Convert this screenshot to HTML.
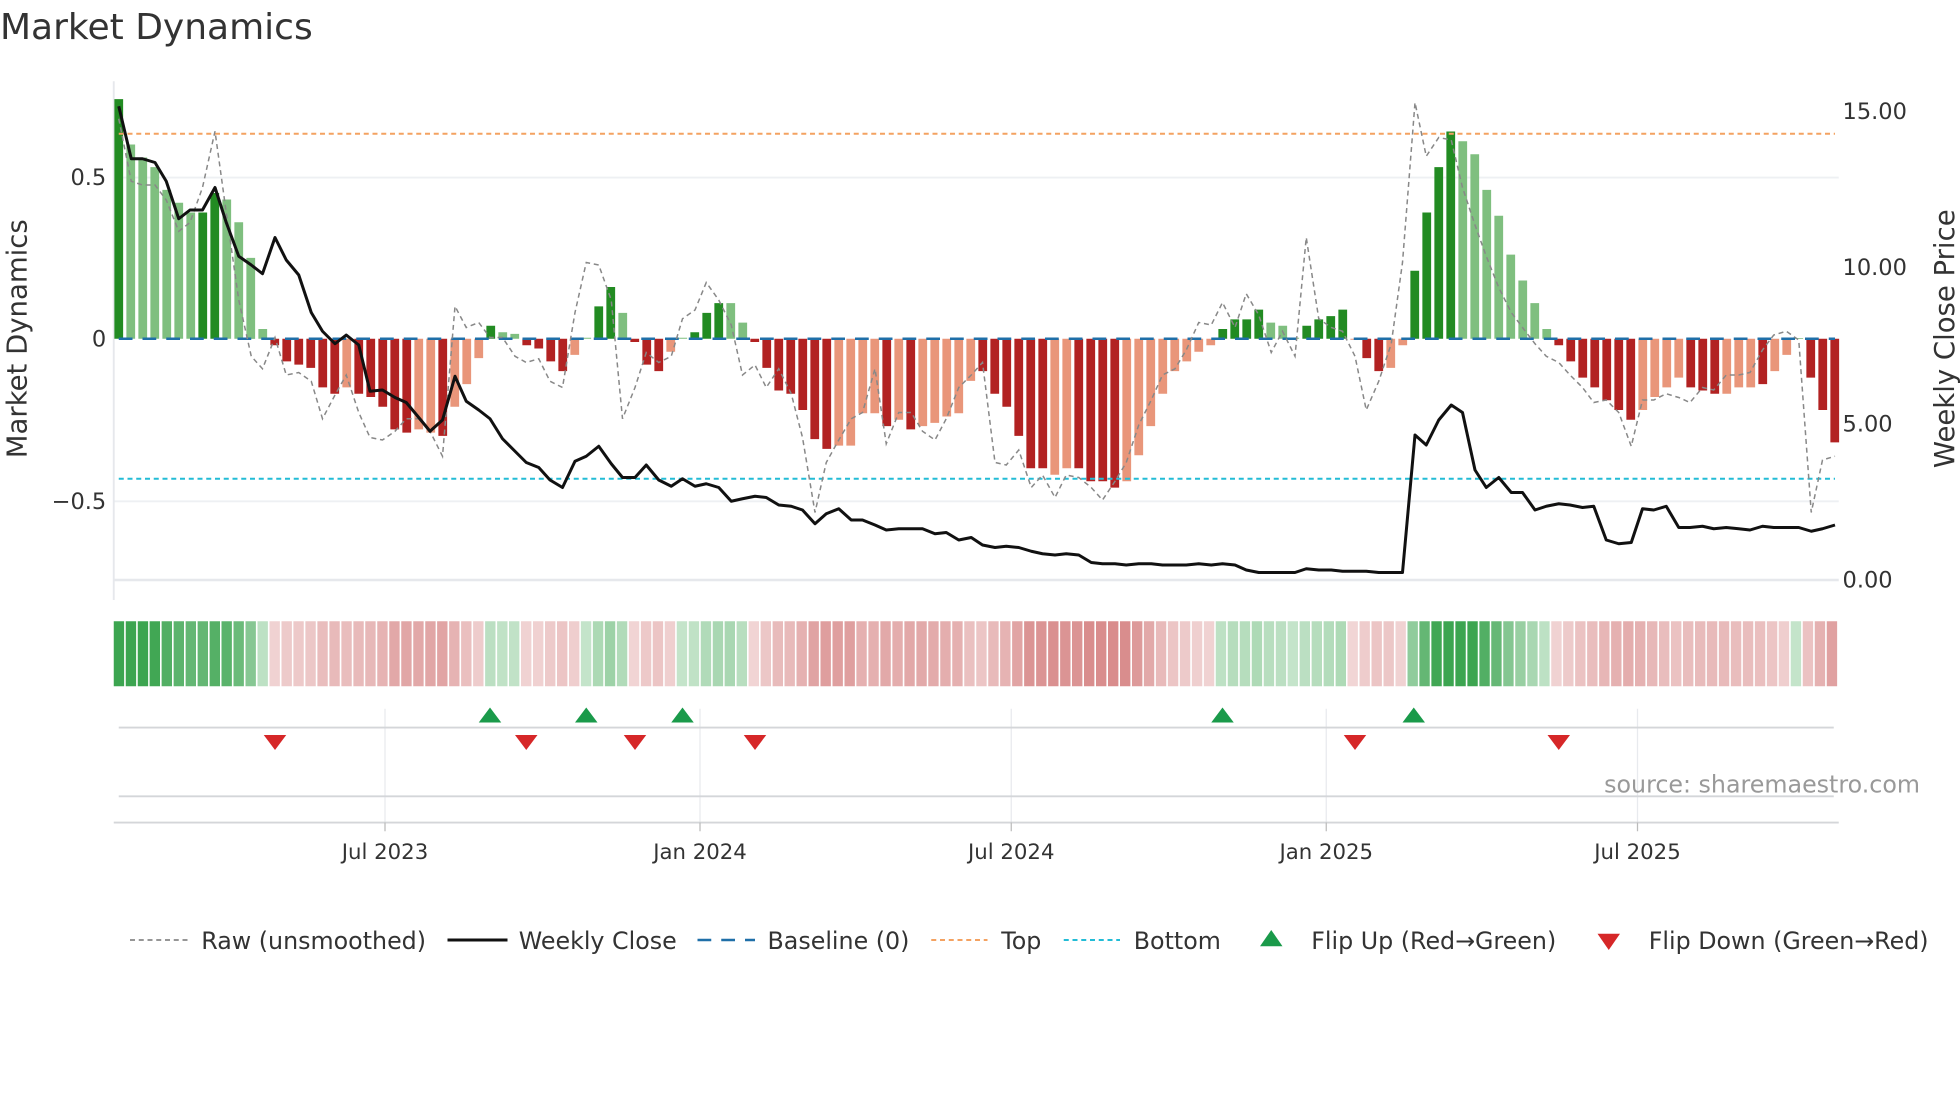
<!DOCTYPE html>
<html><head><meta charset="utf-8"><style>
html,body{margin:0;padding:0;background:#fff;}
svg{display:block;font-family:"DejaVu Sans","Liberation Sans",sans-serif;}
</style></head><body>
<svg id="s" width="1960" height="1102" viewBox="0 0 1568 881.6" xmlns="http://www.w3.org/2000/svg">
<rect width="1568" height="882" fill="#fff"/>
<text x="0" y="31" font-size="28.8" fill="#333">Market Dynamics</text>
<g stroke="#eef0f3" stroke-width="1.5">
<line x1="91" y1="142" x2="1471" y2="142"/>
<line x1="91" y1="401" x2="1471" y2="401"/>
<line x1="91" y1="464" x2="1471" y2="464" stroke="#e6e8ec" stroke-width="2"/>
<line x1="91" y1="65" x2="91" y2="480" stroke="#e6e8ec"/>
</g>
<g id="bars"></g>
<line x1="95" y1="107" x2="1468" y2="107" stroke="#f4a261" stroke-width="1.6" stroke-dasharray="4 3"/>
<line x1="95" y1="383" x2="1468" y2="383" stroke="#22bcd6" stroke-width="1.6" stroke-dasharray="4 3"/>
<line x1="95" y1="271" x2="1468" y2="271" stroke="#1f6fa8" stroke-width="2" stroke-dasharray="11 8"/>
<polyline id="raw" fill="none" stroke="#888" stroke-width="1.2" stroke-dasharray="4 3"/>
<polyline id="close" fill="none" stroke="#111" stroke-width="2.4" stroke-linejoin="round"/>
<g font-size="18" fill="#333" text-anchor="end">
<text x="85" y="148">0.5</text><text x="85" y="277">0</text><text x="85" y="407">−0.5</text>
</g>
<g font-size="18" fill="#333">
<text x="1474" y="95">15.00</text><text x="1474" y="220">10.00</text><text x="1474" y="345">5.00</text><text x="1474" y="470">0.00</text>
</g>
<text transform="translate(21,271) rotate(-90)" text-anchor="middle" font-size="22" fill="#333">Market Dynamics</text>
<text transform="translate(1563,271) rotate(-90)" text-anchor="middle" font-size="22" fill="#333">Weekly Close Price</text>
<g id="strip"></g>
<g stroke="#e8eaee" stroke-width="1">
<line x1="308" y1="567" x2="308" y2="658"/><line x1="560" y1="567" x2="560" y2="658"/><line x1="809" y1="567" x2="809" y2="658"/><line x1="1061" y1="567" x2="1061" y2="658"/><line x1="1310" y1="567" x2="1310" y2="658"/>
</g>
<line x1="95" y1="582" x2="1467" y2="582" stroke="#d4d6d9" stroke-width="1.5"/>
<line x1="95" y1="637" x2="1467" y2="637" stroke="#d4d6d9" stroke-width="1.5"/>
<line x1="91" y1="658" x2="1471" y2="658" stroke="#d4d6d9" stroke-width="1.5"/>
<g stroke="#bbb" stroke-width="1"><line x1="308" y1="658" x2="308" y2="665"/><line x1="560" y1="658" x2="560" y2="665"/><line x1="809" y1="658" x2="809" y2="665"/><line x1="1061" y1="658" x2="1061" y2="665"/><line x1="1310" y1="658" x2="1310" y2="665"/></g>
<g id="flips"></g>
<text x="1536" y="634" text-anchor="end" font-size="19" fill="#999">source: sharemaestro.com</text>
<g font-size="17" fill="#333" text-anchor="middle">
<text x="308" y="687">Jul 2023</text><text x="560" y="687">Jan 2024</text><text x="809" y="687">Jul 2024</text><text x="1061" y="687">Jan 2025</text><text x="1310" y="687">Jul 2025</text>
</g>
<g font-size="19" fill="#333">
<line x1="104" y1="752" x2="150" y2="752" stroke="#888" stroke-width="1.4" stroke-dasharray="4 3"/><text x="161" y="759">Raw (unsmoothed)</text>
<line x1="358" y1="752" x2="406" y2="752" stroke="#111" stroke-width="2.4"/><text x="415" y="759">Weekly Close</text>
<line x1="558" y1="752" x2="604" y2="752" stroke="#1f6fa8" stroke-width="2" stroke-dasharray="11 8"/><text x="614" y="759">Baseline (0)</text>
<line x1="745" y1="752" x2="790" y2="752" stroke="#f4a261" stroke-width="1.6" stroke-dasharray="4 3"/><text x="801" y="759">Top</text>
<line x1="851" y1="752" x2="896" y2="752" stroke="#22bcd6" stroke-width="1.6" stroke-dasharray="4 3"/><text x="907" y="759">Bottom</text>
<polygon points="1008,757 1026,757 1017,744" fill="#1a9a4a"/><text x="1049" y="759">Flip Up (Red→Green)</text>
<polygon points="1278,747 1296,747 1287,760" fill="#d62728"/><text x="1319" y="759">Flip Down (Green→Red)</text>
</g>
</svg>
<script>
var D="G.74 g.60 g.56 g.53 g.46 g.42 g.39 G.39 G.45 g.43 g.36 g.25 g.03 R-.02 R-.07 R-.08 R-.09 R-.15 R-.17 r-.15 R-.17 R-.18 R-.21 R-.28 R-.29 r-.28 r-.29 R-.30 r-.21 r-.14 r-.06 G.04 g.02 g.015 R-.02 R-.03 R-.07 R-.10 r-.05 g.003 G.10 G.16 g.08 R-.01 R-.08 R-.10 r-.04 g.003 G.02 G.08 G.11 g.11 g.05 R-.01 R-.09 R-.16 R-.17 R-.22 R-.31 R-.34 r-.33 r-.33 r-.23 r-.23 R-.27 r-.25 R-.28 r-.27 r-.26 r-.24 r-.23 r-.13 R-.10 R-.17 R-.21 R-.30 R-.40 R-.40 r-.42 r-.40 R-.40 R-.44 R-.44 R-.46 r-.44 r-.36 r-.27 r-.17 r-.10 r-.07 r-.04 r-.02 G.03 G.06 G.06 G.09 g.05 g.04 g.003 G.04 G.06 G.07 G.09 r-.003 R-.06 R-.10 r-.09 r-.02 G.21 G.39 G.53 G.64 g.61 g.57 g.46 g.38 g.26 g.18 g.11 g.03 R-.02 R-.07 R-.12 R-.15 R-.19 R-.22 R-.25 r-.22 r-.18 r-.15 r-.12 R-.15 R-.16 R-.17 r-.17 r-.15 r-.15 R-.14 r-.10 r-.05 g.002 R-.12 R-.22 R-.32".split(" ");
var C={G:"#228b22",g:"#7fbf7f",R:"#b22222",r:"#e9967a"};
var b="",st="";
D.forEach(function(d,i){var t=d[0],v=parseFloat(d.slice(1));var x=95+i*9.6;var y0=271,y1=271-v*259;var top=Math.min(y0,y1),h=Math.max(Math.abs(y1-y0),0.6);
b+='<rect x="'+(x-3.5).toFixed(1)+'" y="'+top.toFixed(1)+'" width="7" height="'+h.toFixed(1)+'" fill="'+C[t]+'"/>';
var a,c;if(v>=0){a=0.3+0.7*Math.min(1,v/0.55);c=[60,165,80];}else{a=0.25+0.45*Math.min(1,-v/0.45);c=[200,90,90];}
var m=function(k){return Math.round(255-(255-c[k])*a)};
st+='<rect x="'+(91+i*9.583).toFixed(1)+'" y="497" width="8.3" height="52" fill="rgb('+m(0)+','+m(1)+','+m(2)+')"/>';});
document.getElementById("bars").innerHTML=b;document.getElementById("strip").innerHTML=st;
document.getElementById("raw").setAttribute("points","95,95 105,145 114,148 124,148 133,160 143,185 152,178 162,150 172,105 181,170 191,240 201,285 210,295 220,270 229,300 239,298 249,305 258,335 268,316 277,300 287,330 296,350 306,352 316,345 325,335 335,335 344,345 354,365 364,245 373,262 383,258 392,270 402,270 412,285 421,290 431,287 440,305 450,310 460,250 469,210 479,212 489,240 498,335 508,310 517,282 527,290 537,285 546,255 556,248 565,226 575,240 585,260 594,300 604,292 613,310 623,295 633,315 642,350 652,410 661,370 671,352 681,335 690,330 700,295 709,355 719,330 729,330 738,345 748,352 757,335 767,310 777,300 786,290 796,370 805,372 815,360 825,390 834,380 844,398 853,380 863,382 873,390 882,400 892,385 901,370 911,340 921,320 930,300 940,295 949,280 959,258 969,260 978,242 988,262 997,235 1007,252 1017,282 1026,265 1036,285 1045,190 1055,255 1065,262 1074,265 1084,285 1093,328 1103,305 1113,275 1122,210 1132,82 1141,125 1151,110 1161,112 1170,150 1180,180 1189,205 1199,230 1209,250 1218,262 1228,275 1237,285 1247,290 1256,300 1266,310 1275,322 1285,320 1295,330 1305,357 1314,320 1323,320 1333,315 1343,318 1352,322 1362,310 1371,312 1381,300 1391,300 1400,298 1410,280 1419,268 1429,265 1439,272 1449,410 1458,368 1468,365");
document.getElementById("close").setAttribute("points","95,85 105,127 114,127 124,130 133,145 143,175 152,168 162,168 172,150 181,178 191,205 201,212 210,219 220,190 229,208 239,220 249,250 258,265 268,275 277,268 287,276 296,313 306,312 316,318 325,322 335,334 344,345 354,336 364,301 373,321 383,328 392,335 402,351 412,361 421,370 431,374 440,384 450,390 460,369 469,365 479,357 489,371 498,382 508,382 517,372 527,384 537,389 546,383 556,389 565,387 575,390 585,401 594,399 604,397 613,398 623,404 633,405 642,408 652,419 661,411 671,407 681,416 690,416 700,420 709,424 719,423 729,423 738,423 748,427 757,426 767,432 777,430 786,436 796,438 805,437 815,438 825,441 834,443 844,444 853,443 863,444 873,450 882,451 892,451 901,452 911,451 921,451 930,452 940,452 949,452 959,451 969,452 978,451 988,452 997,456 1007,458 1017,458 1026,458 1036,458 1045,455 1055,456 1065,456 1074,457 1084,457 1093,457 1103,458 1113,458 1122,458 1132,348 1141,356 1151,336 1161,324 1170,330 1180,376 1189,390 1199,382 1209,394 1218,394 1228,408 1237,405 1247,403 1256,404 1266,406 1275,405 1285,432 1295,435 1305,434 1314,407 1323,408 1333,405 1343,422 1352,422 1362,421 1371,423 1381,422 1391,423 1400,424 1410,421 1419,422 1429,422 1439,422 1449,425 1458,423 1468,420");
var f="";[392,469,546,978,1131].forEach(function(x){f+='<polygon points="'+(x-9)+',578 '+(x+9)+',578 '+x+',566" fill="#1a9a4a"/>';});
[220,421,508,604,1084,1247].forEach(function(x){f+='<polygon points="'+(x-9)+',588 '+(x+9)+',588 '+x+',600" fill="#d62728"/>';});
document.getElementById("flips").innerHTML=f;
</script>
</body></html>
